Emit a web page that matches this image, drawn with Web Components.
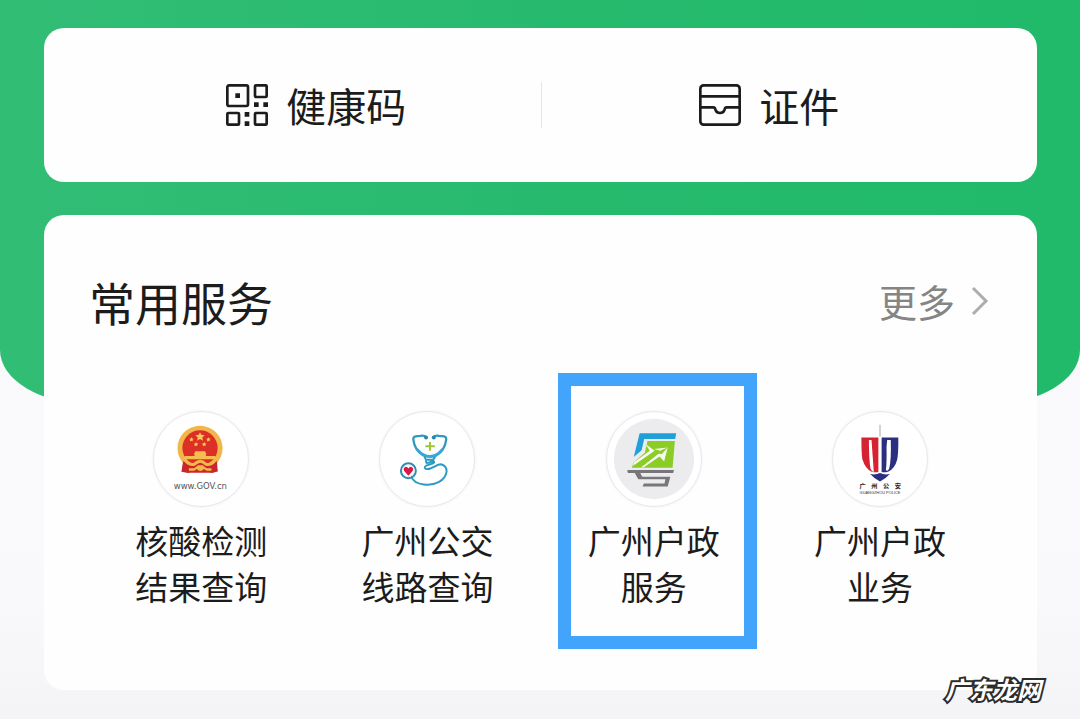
<!DOCTYPE html>
<html lang="zh-CN">
<head>
<meta charset="utf-8">
<meta name="viewport" content="width=device-width, initial-scale=1">
<title>常用服务</title>
<style>
   body {
      margin: 0;
      background: #f7f7f9;
      color: #1c1c1c;
      font-family: "Noto Sans CJK SC", sans-serif;
   }
</style>
</head>
<body>
<service-page>
   <quick-bar>
      <quick-link href="#code" label="健康码">
         <svg width="42" height="42" viewBox="0 0 126 126" fill="none" stroke="#1c1c1c" stroke-width="8">
            <rect x="4" y="4" width="62" height="62" rx="5"/>
            <rect x="87" y="4" width="35" height="35" rx="3"/>
            <rect x="4" y="87" width="35" height="35" rx="3"/>
            <rect x="87" y="87" width="35" height="35" rx="3"/>
            <path fill="#1c1c1c" stroke="none" d="M28 28h14v14H28zM84 55h14v14H84zM112 55h14v14h-14zM56 84h14v14H56zM56 112h14v14H56z"/>
         </svg>
      </quick-link>
      <quick-link href="#cards" label="证件">
         <svg width="42" height="42" viewBox="0 0 126 126" fill="none" stroke="#1c1c1c" stroke-width="8" stroke-linejoin="round">
            <rect x="4" y="4" width="118" height="118" rx="10"/>
            <path d="M4 37H122M4 70H43Q48 70 49 76Q52 87 63 87Q74 87 77 76Q78 70 83 70H122"/>
         </svg>
      </quick-link>
   </quick-bar>

   <service-card heading="常用服务" more="更多">
      <service-item href="#test" line1="核酸检测" line2="结果查询">
         <svg viewBox="39 33 288 288">
            <path fill="#c9272b" d="M130 184L123 216L144 220L157 212H203L216 220L234 215L228 184Z"/>
            <circle cx="180" cy="144" r="69" fill="#f3b64b"/>
            <circle cx="180" cy="143" r="54" fill="#dc3026"/>
            <path fill="#f9c85a" d="M180 95l4 8 10 1-7 7 2 10-9-5-9 5 2-10-7-7 10-1zM154 110l2 4 5 1-4 3 1 5-4-2-5 2 1-5-3-3 5-1zM206 110l2 4 5 1-4 3 1 5-4-2-5 2 1-5-3-3 5-1zM168 125l2 4 5 1-4 3 1 5-4-2-5 2 1-5-3-3 5-1zM193 125l2 4 5 1-4 3 1 5-4-2-5 2 1-5-3-3 5-1z"/>
            <path fill="#c9272b" d="M128 184Q150 196 180 184Q210 196 232 184L234 214L216 219H144L124 214Z"/>
            <path fill="#f6bd4f" d="M166 153h29l5 9h-39zM163 162h35v6h29v10h-94v-10h30z"/>
            <path fill="none" stroke="#f3b64b" stroke-width="9" d="M133 178Q145 198 163 193Q174 184 181 184Q188 184 198 193Q216 198 228 178"/>
            <path fill="#f3b64b" d="M146 205H162L174 196H188L200 205H215V213H200L192 208Q181 220 170 208L162 213H146Z"/>
            <text x="181" y="269" text-anchor="middle" font-family="DejaVu Sans" font-size="26" fill="#555">www.GOV.cn</text>
         </svg>
      </service-item>
      <service-item href="#bus" line1="广州公交" line2="线路查询">
         <svg viewBox="36 33 288 288" fill="none" stroke-linecap="round">
            <path stroke="#2e98bd" stroke-width="7" d="M179 111Q172 104 160 106L145 108Q138 109 138 117Q142 151 169 166Q189 174 208 166Q235 151 239 117Q239 109 232 108L216 106Q205 104 198 111"/>
            <path stroke="#35a9d5" stroke-width="9" d="M151 149Q168 169 189 169Q210 169 226 149"/>
            <circle cx="177" cy="111" r="6" fill="#2889ad"/>
            <circle cx="201" cy="111" r="6" fill="#2889ad"/>
            <path stroke="#2d9bc4" stroke-width="6" d="M173 172L177 179H199L204 172M178 180Q175 190 182 189L198 184Q205 184 200 190L178 197Q168 204 178 208C197 209 207 193 223 193Q241 198 240 216C235 245 204 259 170 255Q139 251 133 233"/>
            <circle cx="123" cy="213" r="23" stroke="#318daf" stroke-width="6"/>
            <circle cx="123" cy="213" r="18" fill="#fff" stroke="#c7e4ef" stroke-width="2"/>
            <path fill="#dc1746" d="M123 228L110 214Q106 204 115 201Q121 201 123 206Q125 201 131 201Q140 204 136 214Z"/>
            <path stroke="#a0c52f" stroke-width="6" stroke-linecap="butt" d="M189 125V152M175 138H204"/>
         </svg>
      </service-item>
      <service-item href="#household" line1="广州户政" line2="服务" marked>
         <svg viewBox="36 33 288 288">
            <circle cx="180" cy="177" r="123" fill="#ececee"/>
            <path fill="#20a0d8" d="M136 98H248L245 116H150L142 150L118 171Z"/>
            <path fill="#8bcc26" d="M160 122H244L237 204H112L118 187L152 158Z"/>
            <path fill="#f7faf0" d="M154 131L182 152L116 198L118 188L167 152Z"/>
            <path fill="#f7faf0" d="M180 146L222 142L198 152Z"/>
            <path fill="#f7faf0" d="M222 142L211 185L197 169L148 203H140L194 161L204 162Z"/>
            <path fill="#77777b" d="M98 211H241L239 220H138L144 231H230L222 261H145L149 252H212L215 239H132L121 220H100Z"/>
         </svg>
      </service-item>
      <service-item href="#police" line1="广州户政" line2="业务">
         <svg viewBox="36 33 288 288">
            <path stroke="#777" stroke-width="2" d="M180 72V108"/>
            <path fill="#d62332" d="M123 111H175V217Q166 219 153 215Q135 207 126 178Q123 161 123 111Z"/>
            <path fill="#fff" d="M146 119H154L161 217Q155 216 151 207Q146 181 146 119Z"/>
            <path fill="#2b2f7f" d="M185 111H236Q237 162 232 181Q225 207 206 215Q195 219 185 217Z"/>
            <path fill="#fff" d="M202 119H213Q215 181 208 207Q203 217 198 211Q201 187 200 140Z"/>
            <path fill="#2b2f7f" d="M150 223Q166 227 180 220Q194 227 210 223Q198 237 180 246Q162 237 150 223Z"/>
            <text x="117 153 189 225" y="266" font-family="Noto Sans CJK SC" font-size="19" font-weight="700" fill="#222">广州公安</text>
            <text x="180" y="283" text-anchor="middle" font-family="Liberation Sans" font-size="12" fill="#333">GUANGZHOU POLICE</text>
         </svg>
      </service-item>
   </service-card>

   <site-mark slot="mark">广东龙网</site-mark>
</service-page>

<script>
function attach(el, html) {
   const template = document.createElement('template');
   template.innerHTML = html;
   el.attachShadow({ mode: 'open' }).appendChild(template.content.cloneNode(true));
}

class ServicePage extends HTMLElement {
   constructor() {
      super();
      attach(this, `
         <div class="backdrop"></div>
         <main><slot></slot></main>
         <slot name="mark"></slot>
         <style>
            :host {
               display: grid;
               grid-template-columns: minmax(0, 1fr);
               position: relative;
               min-height: 100vh;
               background: linear-gradient(#faf9fb 0, #f9f8fa 600px, #f4f4f6 100%);
            }
            .backdrop {
               grid-area: 1 / 1;
               height: 404px;
               border-radius: 0 0 90px 90px / 0 0 54px 54px;
               background: linear-gradient(90deg, #32bd75, #27ba6e 50%, #20ba6a);
            }
            main {
               grid-area: 1 / 1;
               z-index: 1;
               display: flex;
               flex-direction: column;
               gap: 33px;
               padding: 28px 43px 28px 44px;
            }
         </style>
      `);
   }
}

class QuickBar extends HTMLElement {
   constructor() {
      super();
      attach(this, `
         <nav><slot></slot></nav>
         <style>
            :host {
               display: block;
               border-radius: 20px;
               background: #fefefe;
            }
            nav {
               display: grid;
               grid-template-columns: 1fr 1fr;
               align-items: center;
               padding: 54px 44px;
            }
            ::slotted(:not(:first-child)) {
               border-left: 1px solid #e6e6e6;
            }
         </style>
      `);
   }
}

class QuickLink extends HTMLElement {
   constructor() {
      super();
      attach(this, `
         <a><slot></slot><span></span></a>
         <style>
            :host {
               display: block;
               padding-left: 4px;
            }
            a {
               display: flex;
               justify-content: center;
               align-items: center;
               gap: 18px;
               color: inherit;
               text-decoration: none;
               font-size: 40px;
               line-height: 46px;
            }
            ::slotted(svg) {
               display: block;
               flex: none;
            }
         </style>
      `);
      this.shadowRoot.querySelector('a').href = this.getAttribute('href');
      this.shadowRoot.querySelector('span').textContent = this.getAttribute('label');
   }
}

class ServiceCard extends HTMLElement {
   constructor() {
      super();
      attach(this, `
         <header>
            <h2></h2>
            <a href="#more">
               <span></span>
               <svg width="18" height="30" viewBox="0 0 18 30" fill="none" stroke="#adadad" stroke-width="3"><path d="M2 2L15 15L2 28"/></svg>
            </a>
         </header>
         <div class="items"><slot></slot></div>
         <style>
            :host {
               display: block;
               padding: 62px 44px 81px;
               border-radius: 20px;
               background: #fefefe;
            }
            header {
               display: flex;
               justify-content: space-between;
               align-items: center;
               margin-bottom: 86px;
               padding: 0 4px 0 1px;
            }
            h2 {
               margin: 0;
               font-size: 46px;
               line-height: 48px;
               font-weight: 400;
            }
            a {
               display: flex;
               align-items: center;
               gap: 16px;
               color: #858585;
               text-decoration: none;
               font-size: 38px;
               line-height: 48px;
            }
            .items {
               display: grid;
               grid-template-columns: repeat(4, 1fr);
            }
         </style>
      `);
      this.shadowRoot.querySelector('h2').textContent = this.getAttribute('heading');
      this.shadowRoot.querySelector('a span').textContent = this.getAttribute('more');
   }
}

class ServiceItem extends HTMLElement {
   constructor() {
      super();
      attach(this, `
         <a>
            <div class="icon"><slot></slot></div>
            <div class="label"><span></span><span></span></div>
         </a>
         <style>
            :host {
               display: block;
               position: relative;
            }
            /* blue frame round the picked service */
            :host([marked])::after {
               content: "";
               position: absolute;
               inset: -38px 10px -40px 17px;
               border: 13px solid #42a5fb;
               pointer-events: none;
            }
            a {
               display: flex;
               flex-direction: column;
               align-items: center;
               gap: 10px;
               color: inherit;
               text-decoration: none;
            }
            .icon {
               box-sizing: border-box;
               width: 96px;
               height: 96px;
               border: 1px solid #e9e7ec;
               border-radius: 50%;
               background: #fff;
               box-shadow: 0 0 3px #f0eef3;
            }
            ::slotted(svg) {
               display: block;
               width: 100%;
               height: 100%;
            }
            .label {
               display: flex;
               flex-direction: column;
               align-items: center;
               font-size: 33px;
               line-height: 46px;
            }
         </style>
      `);
      const lines = this.shadowRoot.querySelectorAll('span');
      this.shadowRoot.querySelector('a').href = this.getAttribute('href');
      lines[0].textContent = this.getAttribute('line1');
      lines[1].textContent = this.getAttribute('line2');
   }
}

class SiteMark extends HTMLElement {
   constructor() {
      super();
      attach(this, `
         <slot></slot>
         <style>
            :host {
               position: absolute;
               z-index: 2;
               right: 39px;
               bottom: 15px;
               color: #fff;
               font-size: 24px;
               line-height: 30px;
               font-weight: 700;
               font-style: italic;
               -webkit-text-stroke: 4px #2c2c2c;
               paint-order: stroke fill;
            }
         </style>
      `);
   }
}

window.customElements.define('service-page', ServicePage);
window.customElements.define('quick-bar', QuickBar);
window.customElements.define('quick-link', QuickLink);
window.customElements.define('service-card', ServiceCard);
window.customElements.define('service-item', ServiceItem);
window.customElements.define('site-mark', SiteMark);
</script>
</body>
</html>
